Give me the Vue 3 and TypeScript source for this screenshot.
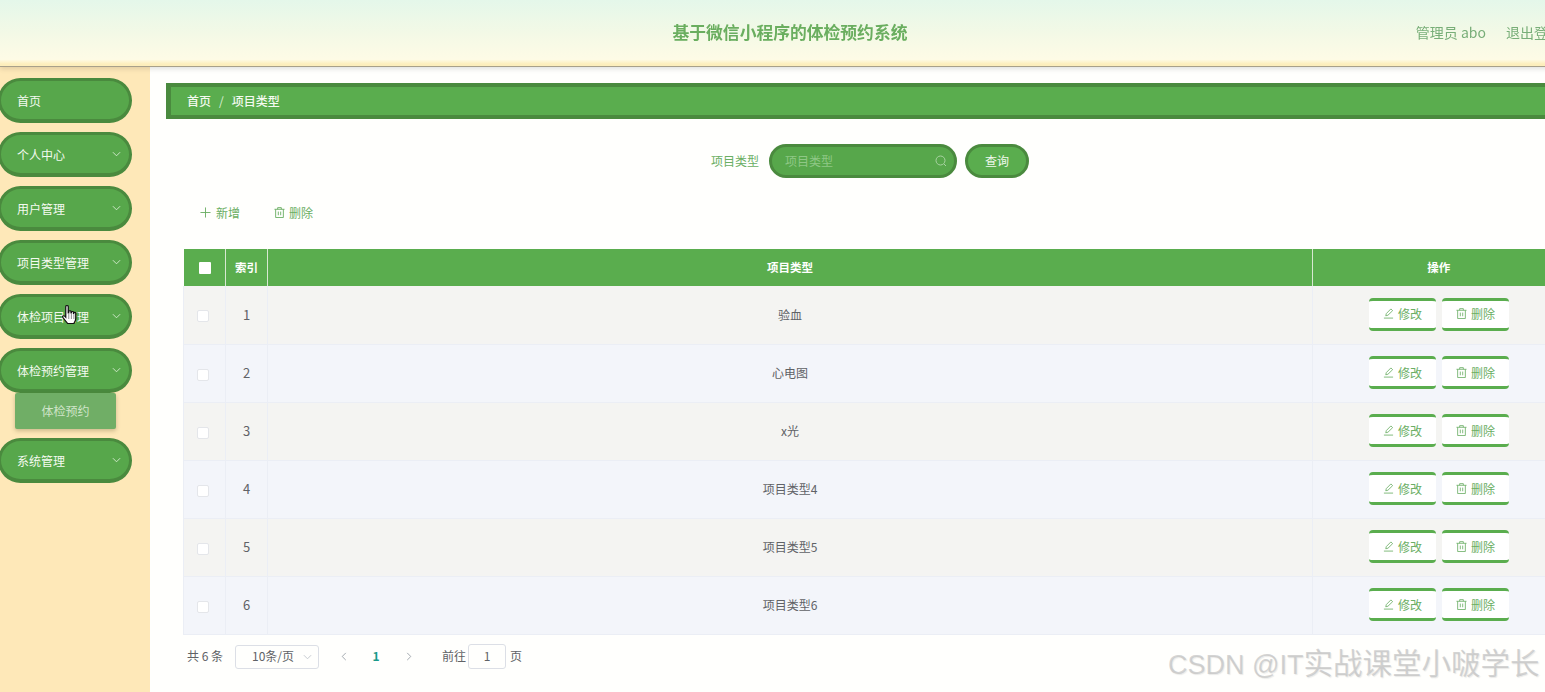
<script setup lang="ts">
interface MenuItem { label: string; arrow: boolean; sub?: string }
const menus: MenuItem[] = [
  { label: '首页', arrow: false },
  { label: '个人中心', arrow: true },
  { label: '用户管理', arrow: true },
  { label: '项目类型管理', arrow: true },
  { label: '体检项目管理', arrow: true },
  { label: '体检预约管理', arrow: true, sub: '体检预约' },
  { label: '系统管理', arrow: true },
]
const rows = [
  { id: 1, name: '验血' },
  { id: 2, name: '心电图' },
  { id: 3, name: 'x光' },
  { id: 4, name: '项目类型4' },
  { id: 5, name: '项目类型5' },
  { id: 6, name: '项目类型6' },
]
</script>

<template>
  <div class="page">
    <header class="top">
      <div></div>
      <h1 class="title">基于微信小程序的体检预约系统</h1>
      <div class="user">
        <span>管理员 abo</span>
        <span>退出登录</span>
      </div>
    </header>
    <div class="body">
      <aside class="side">
        <template v-for="m in menus" :key="m.label">
          <div class="menu">
            <span>{{ m.label }}</span>
            <svg v-if="m.arrow" class="chev" viewBox="0 0 10 6" width="9" height="6"><path d="M1 1l4 4 4-4" fill="none" stroke="#d8ecd2" stroke-width="1"/></svg>
          </div>
          <div v-if="m.sub" class="sub">{{ m.sub }}</div>
        </template>
      </aside>
      <main class="main">
        <div class="crumb"><b>首页</b><i>/</i><b>项目类型</b></div>
        <div class="search">
          <label>项目类型</label>
          <div class="input">
            <span>项目类型</span>
            <svg viewBox="0 0 12 12" width="12" height="12"><circle cx="5.5" cy="5.5" r="4.5" fill="none" stroke="#a9d3a2" stroke-width="1"/><path d="M9 9l2 2" stroke="#a9d3a2" stroke-width="1"/></svg>
          </div>
          <button class="query">查询</button>
        </div>
        <div class="tools">
          <span class="tool">
            <svg viewBox="0 0 12 12" width="11" height="11"><path d="M6 .5v11M.5 6h11" stroke="#6aae63" stroke-width="1" fill="none"/></svg>新增
          </span>
          <span class="tool">
            <svg viewBox="0 0 12 12" width="11" height="11"><path d="M.5 2.5h11M4 2.5V.7h4v1.8M1.800 2.500v9h8.400v-9M4.700 5v4M7.300 5v4" stroke="#6aae63" stroke-width="1" fill="none"/></svg>删除
          </span>
        </div>
        <table class="grid">
          <colgroup><col class="c1"><col class="c2"><col><col class="c4"></colgroup>
          <thead>
            <tr>
              <th><span class="check head"></span></th>
              <th>索引</th>
              <th>项目类型</th>
              <th>操作</th>
            </tr>
          </thead>
          <tbody>
            <tr v-for="r in rows" :key="r.id">
              <td><span class="check row"></span></td>
              <td class="num">{{ r.id }}</td>
              <td>{{ r.name }}</td>
              <td class="acts">
                <button class="act">
                  <svg viewBox="0 0 12 12" width="11" height="11"><path d="M3 8.500l.6-2.400L8.600 1l1.900 1.900-5.100 5zM1 11h10" stroke="#6aae63" stroke-width=".9" fill="none"/></svg>修改
                </button>
                <button class="act">
                  <svg viewBox="0 0 12 12" width="11" height="11"><path d="M.5 2.5h11M4 2.5V.7h4v1.8M1.800 2.500v9h8.400v-9M4.700 5v4M7.300 5v4" stroke="#6aae63" stroke-width=".9" fill="none"/></svg>删除
                </button>
              </td>
            </tr>
          </tbody>
        </table>
        <div class="pager">
          <span class="total">共 6 条</span>
          <div class="size">
            <span>10条/页</span>
            <svg viewBox="0 0 10 6" width="9" height="6"><path d="M1 1l4 4 4-4" fill="none" stroke="#c0c4cc" stroke-width="1"/></svg>
          </div>
          <svg class="prev" viewBox="0 0 6 10" width="6" height="9"><path d="M5 1L1 5l4 4" fill="none" stroke="#9aa0a8" stroke-width="1"/></svg>
          <b class="cur">1</b>
          <svg class="next" viewBox="0 0 6 10" width="6" height="9"><path d="M1 1l4 4-4 4" fill="none" stroke="#9aa0a8" stroke-width="1"/></svg>
          <span class="goto">前往</span>
          <div class="jump">1</div>
          <span class="pg">页</span>
        </div>
      </main>
    </div>
    <svg class="hand" viewBox="0 0 12 20" width="15" height="20" preserveAspectRatio="none">
      <path d="M3 1.500c0-1.300 2-1.300 2 0V8h.4V6.600c0-1 1.800-1 1.800 0V8h.3V7.200c0-1 1.700-1 1.700 0V8.500h.2V8c0-.9 1.600-.9 1.600 0v5.500c0 2-.8 3.300-1.500 5H4.500C3.500 17 1.800 14.500.6 12.300c-.6-1.200.8-2 1.600-1.100L3 12.300z" fill="#fff" stroke="#111" stroke-width="1"/>
      <path d="M5.400 9v5M7.500 9v5M9.500 9v5" stroke="#555" stroke-width=".6" fill="none"/>
    </svg>
    <div class="mark">CSDN @IT<span>实战课堂小啵学长</span></div>
  </div>
</template>

<style>
html, body { margin: 0; overflow: hidden; background: #fff; }
</style>

<style scoped>
.page {
  position: relative;
  width: 1545px;
  height: 692px;
  overflow: hidden;
  font-family: "Noto Sans CJK SC", "Noto Sans", sans-serif;
  color: #606266;
  filter: blur(.35px);
}
.top {
  box-sizing: border-box;
  width: 1580px;
  height: 67px;
  display: grid;
  grid-template-columns: 1fr auto 1fr;
  align-items: center;
  padding: 0 18px 2px;
  background: linear-gradient(180deg, #e4f7ea 0%, #f3f9e6 50%, #fefbe6 90%, #fdeebc 97%);
  border-bottom: 1px solid #a8a08a;
  box-shadow: 0 2px 5px rgba(0, 0, 0, .12);
  position: relative;
}
.title { margin: 0; font-size: 16.800px; font-weight: 700; color: #6aae5f; }
.user { display: flex; justify-content: flex-end; gap: 20px; font-size: 14px; color: #78ae78; }
.body { display: flex; width: 1580px; height: 625px; }
.side {
  box-sizing: border-box;
  flex: 0 0 150px;
  background: #fee8b8;
  padding-top: 11px;
}
.menu {
  box-sizing: border-box;
  width: 134px;
  height: 45px;
  margin: 0 0 9px -2px;
  padding: 0 8px 0 16px;
  display: flex;
  align-items: center;
  justify-content: space-between;
  border-radius: 23px;
  background: #57a74b;
  border: 3px solid #4a8a3e;
  border-bottom-width: 4px;
  color: #f4faf0;
  font-size: 12px;
  font-weight: 400;
}
.sub {
  width: 101px;
  height: 36px;
  margin: -9px 0 9px 15px;
  border-radius: 2px;
  background: #70ae66;
  box-shadow: 0 2px 4px rgba(90, 80, 40, .3);
  color: #cfe4c9;
  font-size: 12px;
  line-height: 36px;
  text-align: center;
}
.main { flex: 1; padding: 16px 16px 0; background: #fffffd; }
.crumb {
  box-sizing: border-box;
  height: 36px;
  display: flex;
  align-items: center;
  gap: 8px;
  padding: 0 0 2px 16px;
  background: #5aad4e;
  border: solid #4a8a3e;
  border-width: 4px 0 4px 5px;
  color: #f4faf0;
  font-size: 12px;
}
.crumb b { font-weight: 500; }
.crumb i { font-style: normal; color: #dcefd6; }
.search {
  height: 34px;
  margin-top: 25px;
  display: flex;
  align-items: center;
  padding-left: 545px;
}
.search label { width: 47px; margin-right: 11px; font-size: 12px; color: #6aae63; white-space: nowrap; padding-bottom: 2px; }
.input {
  box-sizing: border-box;
  width: 188px;
  height: 34px;
  margin-right: 8px;
  padding: 0 7px 2px 13px;
  display: flex;
  align-items: center;
  justify-content: space-between;
  border: 3px solid #4a8a3e;
  border-radius: 17px;
  background: #57a74b;
  color: #8fc786;
  font-size: 12px;
}
.input svg { margin-top: 1px; }
.query {
  box-sizing: border-box;
  width: 64px;
  height: 34px;
  border: 3px solid #4a8a3e;
  border-radius: 17px;
  background: #5aad4e;
  color: #f0f8ec;
  font: 12px "Noto Sans CJK SC", sans-serif;
  padding: 0 0 1px;
}
.tools {
  height: 20px;
  margin-top: 24px;
  padding-left: 34px;
  display: flex;
  align-items: center;
  gap: 34px;
}
.tool { display: flex; align-items: center; gap: 5px; font-size: 12px; color: #6aae63; }
.tool + .tool { gap: 4px; }
.grid {
  width: 1382px;
  margin: 27px 0 0 17px;
  table-layout: fixed;
  border-collapse: collapse;
  font-size: 12px;
}
.c1 { width: 42px; }
.c2 { width: 42px; }
.c4 { width: 252px; }
th {
  height: 37px;
  padding: 0 0 2px;
  box-sizing: border-box;
  background: #5aad4e;
  color: #fff;
  font-weight: 700;
  font-size: 11.500px;
  text-align: center;
  border-left: 1px solid #d8e8d2;
}
th:first-child { border-left: 0; }
td {
  box-sizing: border-box;
  height: 58px;
  padding: 0 0 1px;
  text-align: center;
  border: 1px solid #ebeef5;
  border-top: 0;
  color: #606266;
}
tbody tr:nth-child(odd) td { background: #f4f4f2; }
tbody tr:nth-child(even) td { background: #f3f5fa; }
.num { font-size: 13px; }
.check {
  display: inline-block;
  box-sizing: border-box;
  width: 12px;
  height: 12px;
  background: #fff;
  border: 1px solid #e4e6ea;
  border-radius: 2px;
  vertical-align: middle;
}
.check.head { border: 0; border-radius: 1px; margin-left: 2px; }
.check.row { margin-right: 4px; }
.acts { text-align: left; padding-left: 56px; white-space: nowrap; font-size: 0; }
.act {
  box-sizing: border-box;
  width: 67px;
  height: 33px;
  margin-right: 6px;
  padding: 0 0 1px;
  display: inline-flex;
  align-items: center;
  justify-content: center;
  gap: 4px;
  background: #fff;
  border: 0;
  border-top: 3px solid #5aad4e;
  border-bottom: 3px solid #5aad4e;
  border-radius: 4px;
  color: #6aae63;
  font: 12px "Noto Sans CJK SC", sans-serif;
}
.pager {
  height: 24px;
  margin: 10px 0 0 21px;
  display: flex;
  align-items: center;
  font-size: 12px;
  color: #606266;
}
.total, .goto, .pg, .size span { padding-bottom: 2px; }
.total { width: 48px; }
.size {
  box-sizing: border-box;
  width: 84px;
  height: 24px;
  padding: 0 6px 0 16px;
  display: flex;
  align-items: center;
  justify-content: space-between;
  border: 1px solid #dcdfe6;
  border-radius: 3px;
}
.prev { margin-left: 22px; }
.cur { width: 16px; margin-left: 21px; text-align: center; color: #1a9a8a; font-size: 12px; padding-bottom: 2px; }
.next { margin-left: 22px; }
.goto { margin-left: 30px; }
.jump {
  box-sizing: border-box;
  width: 38px;
  height: 25px;
  margin: 0 4px 0 2px;
  border: 1px solid #dcdfe6;
  border-radius: 3px;
  text-align: center;
  line-height: 22px;
}
.hand { position: absolute; left: 62px; top: 305px; }
.mark {
  position: absolute;
  left: 1168px;
  top: 646px;
  font-family: "Liberation Sans", "Noto Sans CJK SC", sans-serif;
  font-size: 27px;
  line-height: 36px;
  color: rgba(185, 185, 185, .6);
  text-shadow: 1px 1px 1px rgba(150, 150, 150, .2);
  white-space: nowrap;
}
.mark span { font-size: 29.500px; }
</style>
